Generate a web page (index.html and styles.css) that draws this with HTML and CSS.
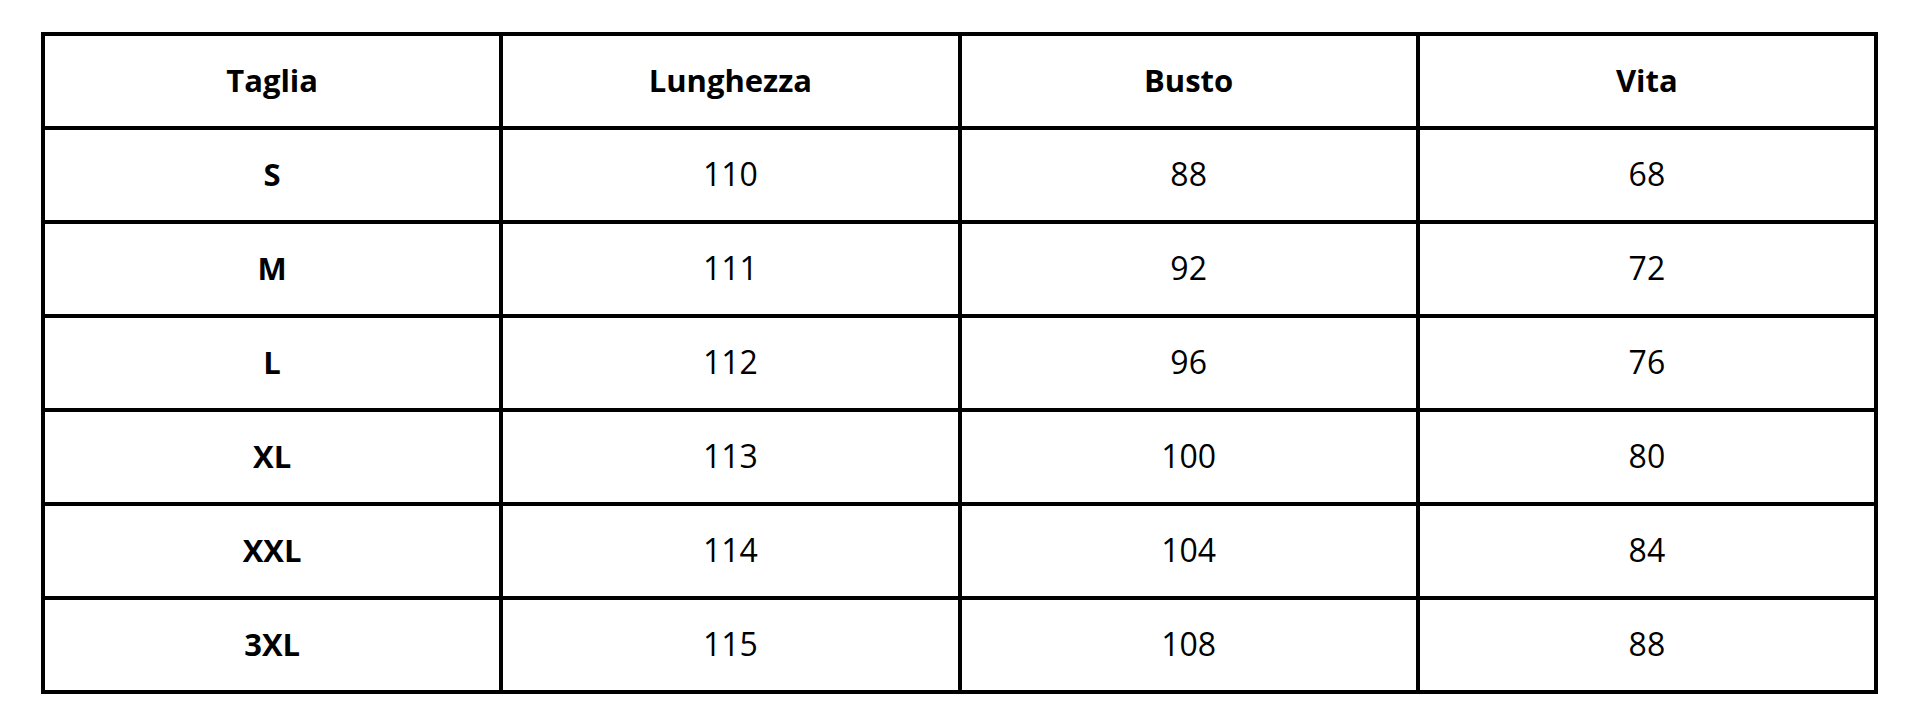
FILE: index.html
```html
<!DOCTYPE html>
<html lang="it">
<head>
<meta charset="utf-8">
<title>Tabella taglie</title>
<link rel="stylesheet" href="styles.css">
</head>
<body>
<div class="size-table">
  <div class="cell head">Taglia</div>
  <div class="cell head">Lunghezza</div>
  <div class="cell head">Busto</div>
  <div class="cell head">Vita</div>

  <div class="cell size">S</div>
  <div class="cell">110</div>
  <div class="cell">88</div>
  <div class="cell">68</div>

  <div class="cell size">M</div>
  <div class="cell">111</div>
  <div class="cell">92</div>
  <div class="cell">72</div>

  <div class="cell size">L</div>
  <div class="cell">112</div>
  <div class="cell">96</div>
  <div class="cell">76</div>

  <div class="cell size">XL</div>
  <div class="cell">113</div>
  <div class="cell">100</div>
  <div class="cell">80</div>

  <div class="cell size">XXL</div>
  <div class="cell">114</div>
  <div class="cell">104</div>
  <div class="cell">84</div>

  <div class="cell size">3XL</div>
  <div class="cell">115</div>
  <div class="cell">108</div>
  <div class="cell">88</div>
</div>
</body>
</html>
```

FILE: styles.css
```css
html, body {
  margin: 0;
  padding: 0;
  background: #ffffff;
}

body {
  padding: 32px 0 0 41px;
  font-family: "Open Sans", "Liberation Sans", sans-serif;
  color: #000000;
}

.size-table {
  box-sizing: border-box;
  width: 1837px;
  display: grid;
  grid-template-columns: repeat(4, 1fr);
  grid-auto-rows: 94px;
  border-top: 4px solid #000;
  border-left: 4px solid #000;
}

.cell {
  display: flex;
  align-items: center;
  justify-content: center;
  padding-bottom: 2px;
  border-right: 4px solid #000;
  border-bottom: 4px solid #000;
  font-size: 32px;
  font-weight: 400;
  line-height: 1;
}

.head,
.size {
  font-weight: 700;
  font-size: 31px;
}
```
